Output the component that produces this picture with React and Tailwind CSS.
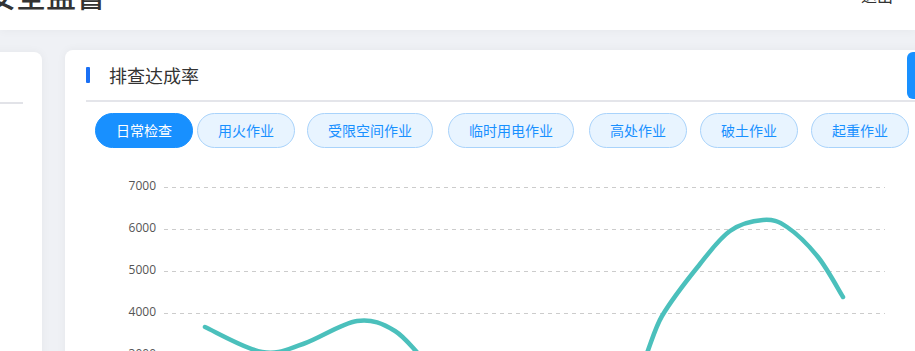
import React from "react";

const tabs = [
  { label: "日常检查", active: true, gap: "" },
  { label: "用火作业", gap: "ml-[4px]" },
  { label: "受限空间作业", gap: "ml-[12px]" },
  { label: "临时用电作业", gap: "ml-[15px]" },
  { label: "高处作业", gap: "ml-[15px]" },
  { label: "破土作业", gap: "ml-[13px]" },
  { label: "起重作业", gap: "ml-[13px]" },
];

// grid rows in page coords
const ticks = [
  { v: "7000", y: 187 },
  { v: "6000", y: 229 },
  { v: "5000", y: 271 },
  { v: "4000", y: 313 },
  { v: "3000", y: 355 },
];

const pts = [
  [205, 327],
  [262, 352],
  [303, 344],
  [357, 321],
  [395, 331],
  [430, 365],
  [480, 400],
  [560, 410],
  [630, 382],
  [662, 316],
  [700, 264],
  [730, 231],
  [763, 220],
  [787, 227],
  [818, 257],
  [843, 297],
];

// catmull-rom -> cubic bezier
function smoothPath(p) {
  let d = `M${p[0][0]},${p[0][1]}`;
  for (let i = 0; i < p.length - 1; i++) {
    const p0 = p[i - 1] || p[i];
    const p1 = p[i];
    const p2 = p[i + 1];
    const p3 = p[i + 2] || p2;
    const c1x = p1[0] + (p2[0] - p0[0]) / 6;
    const c1y = p1[1] + (p2[1] - p0[1]) / 6;
    const c2x = p2[0] - (p3[0] - p1[0]) / 6;
    const c2y = p2[1] - (p3[1] - p1[1]) / 6;
    d += ` C${c1x},${c1y} ${c2x},${c2y} ${p2[0]},${p2[1]}`;
  }
  return d;
}

function Chart() {
  return (
    <svg width="880" height="240" className="block mt-[12px]">
      <g transform="translate(-65,-160)">
        {ticks.map((t) => (
          <g key={t.v}>
            <line
              x1="164"
              x2="885"
              y1={t.y + 0.5}
              y2={t.y + 0.5}
              stroke="#cccccc"
              strokeDasharray="4 4"
            />
            <text
              x="156"
              y={t.y}
              textAnchor="end"
              dominantBaseline="middle"
              fontSize="12"
              fill="#555"
              fontFamily="'Open Sans', sans-serif"
            >
              {t.v}
            </text>
          </g>
        ))}
        <path
          d={smoothPath(pts)}
          fill="none"
          stroke="#4bc0bc"
          strokeWidth="4.5"
          strokeLinecap="round"
        />
      </g>
    </svg>
  );
}

export default function App() {
  return (
    <div
      className="h-[351px] w-[915px] overflow-hidden bg-[#eff1f5]"
      style={{ fontFamily: "'Noto Sans CJK SC', 'Noto Sans', sans-serif" }}
    >
      {/* top bar */}
      <div className="h-[30px] bg-white flex justify-between shadow-[0_2px_8px_rgba(0,0,0,0.03)]">
        <div className="-mt-[21px] -ml-[14px] text-[30px] leading-[30px] font-medium text-[#333]">
          安全监督
        </div>
        <div className="-mt-[13px] mr-[22px] text-[16px] leading-[16px] text-[#333]">
          退出
        </div>
      </div>

      <div className="flex items-start pt-[20px]">
        {/* left card, mostly off screen */}
        <div className="-ml-[20px] mt-[2px] w-[62px] h-[400px] shrink-0 bg-white rounded-lg shadow-[0_0_10px_rgba(0,0,0,0.05)]">
          <div className="h-[52px] mr-[19px] border-b-2 border-[#e2e3e8]" />
        </div>

        {/* main card */}
        <div className="ml-[23px] w-[880px] h-[400px] shrink-0 bg-white rounded-lg shadow-[0_0_10px_rgba(0,0,0,0.05)]">
          <div className="ml-[21px] h-[52px] flex items-center border-b-2 border-[#e4e5ea]">
            <div className="w-[4px] h-[16px] bg-[#1a70f5] rounded-[1px]" />
            <div className="ml-[19px] text-[18px] text-[#333]">排查达成率</div>
            <div className="ml-auto w-[38px] h-[47px] rounded-[6px] bg-[#1890ff]" />
          </div>

          <div className="flex pl-[30px] mt-[11px]">
            {tabs.map((t) => (
              <div
                key={t.label}
                className={
                  t.gap +
                  " h-[35px] px-[20px] rounded-full border flex items-center text-[14px] " +
                  (t.active
                    ? "bg-[#1890ff] border-[#1890ff] text-white"
                    : "bg-[#e8f4ff] border-[#a9d3fb] text-[#1890ff]")
                }
              >
                {t.label}
              </div>
            ))}
          </div>

          <Chart />
        </div>
      </div>
    </div>
  );
}
